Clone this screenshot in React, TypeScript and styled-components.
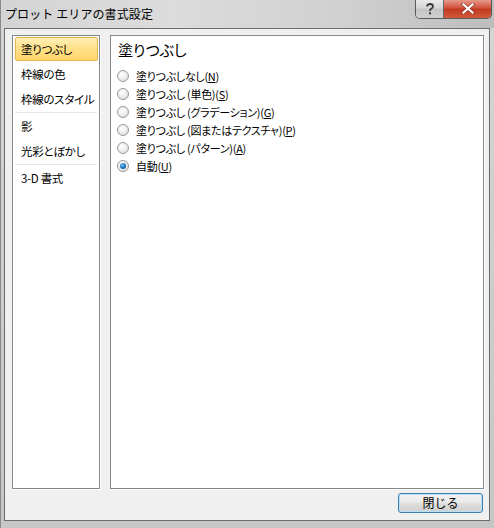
import React from "react";
import styled, { createGlobalStyle } from "styled-components";

const Global = createGlobalStyle`
  html, body { margin: 0; padding: 0; background: #ffffff; }
  body { font-family: "Noto Sans CJK JP", "Noto Sans", sans-serif; }
  * { box-sizing: border-box; }
`;

const Window = styled.div`
  width: 494px;
  height: 528px;
  display: flex;
  flex-direction: column;
  background: linear-gradient(to bottom, #d6d6d6 0%, #cfcfcf 40%, #c6c6c6 100%);
  border-left: 1px solid #8a8a8a;
  overflow: hidden;
`;

const TitleBar = styled.div`
  height: 28px;
  flex: none;
  display: flex;
  align-items: flex-start;
  justify-content: space-between;
  padding-left: 4px;
  background: linear-gradient(to right, #d4d4d4 0%, #dcdcdc 35%, #d0d0d0 70%, #bdbdbd 100%);
`;

const Title = styled.div`
  font-family: "Noto Sans CJK JP", sans-serif;
  font-size: 12px;
  line-height: 28px;
  color: #000;
  letter-spacing: 0.1px;
`;

const Caption = styled.div`
  display: flex;
  margin-right: 2px;
  margin-top: -1px;
  border: 1px solid #5a5a5a;
  border-top: none;
  border-radius: 0 0 5px 5px;
  overflow: hidden;
`;

const CapButton = styled.div<{ $close?: boolean }>`
  height: 19px;
  width: ${(p) => (p.$close ? "48px" : "27px")};
  display: flex;
  align-items: center;
  justify-content: center;
  background: ${(p) =>
    p.$close
      ? "linear-gradient(to bottom, #e8a493 0%, #d2553f 45%, #c23a22 55%, #d35a3c 100%)"
      : "linear-gradient(to bottom, #ececec 0%, #d6d6d6 45%, #c4c4c4 55%, #d0d0d0 100%)"};
  & + & { border-left: 1px solid #6a6a6a; }
`;

const Client = styled.div`
  flex: 1;
  margin: 0 4px 7px 3px;
  border: 1px solid #6b6b6b;
  background: #f0f0f0;
  padding: 6px 5px 7px 7px;
  display: grid;
  grid-template-columns: 88px 374px;
  grid-template-rows: 454px 20px;
  column-gap: 10px;
  row-gap: 4px;
`;

const Panel = styled.div`
  background: #ffffff;
  border: 1px solid #828790;
  box-shadow: 1px 1px 0 #ffffff;
`;

const NavPanel = styled(Panel)`
  padding: 1px 1px 1px 2px;
  display: flex;
  flex-direction: column;
`;

const NavItem = styled.div<{ $selected?: boolean }>`
  flex: none;
  height: 24px;
  margin-bottom: 1px;
  padding-left: ${(p) => (p.$selected ? "5px" : "6px")};
  display: flex;
  align-items: center;
  white-space: nowrap;
  font-size: 11.5px;
  letter-spacing: -0.3px;
  font-feature-settings: "palt";
  color: #000;
  border-radius: 2px;
  border: ${(p) => (p.$selected ? "1px solid #e3b650" : "none")};
  background: ${(p) =>
    p.$selected
      ? "linear-gradient(to bottom, #fff0b8 0%, #ffe08a 45%, #ffd66a 100%)"
      : "transparent"};
`;

const NavSep = styled.div`
  flex: none;
  height: 1px;
  margin: 0 1px 1px 0;
  background: #e6e6e6;
`;

const ContentPanel = styled(Panel)`
  padding: 3px 6px;
  display: flex;
  flex-direction: column;
`;

const Heading = styled.div`
  font-size: 15px;
  line-height: 22px;
  height: 22px;
  margin-left: 1px;
  font-feature-settings: "palt";
  color: #000;
  margin-bottom: 6px;
`;

const RadioRow = styled.label`
  flex: none;
  height: 18px;
  display: flex;
  align-items: center;
  gap: 7px;
  white-space: nowrap;
  font-size: 11px;
  letter-spacing: -0.3px;
  font-feature-settings: "palt";
  color: #000;
`;

const RadioCircle = styled.span<{ $checked?: boolean }>`
  width: 12px;
  height: 12px;
  border-radius: 50%;
  border: 1px solid #9a9a9a;
  background: radial-gradient(circle at 40% 35%, #ffffff 0%, #ebebeb 55%, #d2d2d2 100%);
  display: flex;
  align-items: center;
  justify-content: center;
  flex: none;
  &::after {
    content: "";
    display: ${(p) => (p.$checked ? "block" : "none")};
    width: 6px;
    height: 6px;
    border-radius: 50%;
    background: radial-gradient(circle at 40% 35%, #8cd0ff 0%, #1f7bc8 45%, #0b3f7a 100%);
  }
`;

const U = styled.span`
  text-decoration: underline;
  text-underline-offset: 1px;
`;

const ButtonRow = styled.div`
  grid-column: 1 / span 2;
  display: flex;
  justify-content: flex-end;
  padding-right: 1px;
`;

const Button = styled.button`
  width: 85px;
  height: 20px;
  font-family: "Noto Sans CJK JP", sans-serif;
  font-size: 12px;
  line-height: 16px;
  color: #000;
  border: 1px solid #3c7fb1;
  border-radius: 3px;
  background: linear-gradient(to bottom, #f2f2f2 0%, #ebebeb 45%, #dddddd 55%, #cfcfcf 100%);
  box-shadow: inset 0 0 0 1px #b9e0f7;
  padding: 0;
`;

const navItems: (string | null)[] = [
  "塗りつぶし",
  "枠線の色",
  "枠線のスタイル",
  null,
  "影",
  "光彩とぼかし",
  null,
  "3-D 書式",
];

const options: { label: string; key: string; checked?: boolean }[] = [
  { label: "塗りつぶしなし", key: "N" },
  { label: "塗りつぶし (単色)", key: "S" },
  { label: "塗りつぶし (グラデーション)", key: "G" },
  { label: "塗りつぶし (図またはテクスチャ)", key: "P" },
  { label: "塗りつぶし (パターン)", key: "A" },
  { label: "自動", key: "U", checked: true },
];

export default function App() {
  return (
    <>
      <Global />
      <Window>
        <TitleBar>
          <Title>プロット エリアの書式設定</Title>
          <Caption>
            <CapButton>
              <svg width="10" height="12" viewBox="0 0 10 12">
                <path
                  d="M2 3.5 C2 1.5 3.5 1 5 1 C6.8 1 8 2 8 3.5 C8 5 6.5 5.5 5.5 6.3 C5 6.8 5 7.3 5 8"
                  fill="none"
                  stroke="#3a3a3a"
                  strokeWidth="1.8"
                />
                <rect x="4" y="9.3" width="2" height="2" fill="#3a3a3a" />
              </svg>
            </CapButton>
            <CapButton $close>
              <svg width="14" height="11" viewBox="0 0 14 11">
                <path
                  d="M2 1 L12 10 M12 1 L2 10"
                  stroke="#5a1a10"
                  strokeWidth="3.4"
                  strokeLinecap="square"
                  opacity="0.5"
                />
                <path
                  d="M2.5 1.5 L11.5 9.5 M11.5 1.5 L2.5 9.5"
                  stroke="#ffffff"
                  strokeWidth="2.2"
                  strokeLinecap="square"
                />
              </svg>
            </CapButton>
          </Caption>
        </TitleBar>
        <Client>
          <NavPanel>
            {navItems.map((item, i) =>
              item === null ? (
                <NavSep key={i} />
              ) : (
                <NavItem key={i} $selected={i === 0}>
                  {item}
                </NavItem>
              )
            )}
          </NavPanel>
          <ContentPanel>
            <Heading>塗りつぶし</Heading>
            {options.map((o) => (
              <RadioRow key={o.key}>
                <RadioCircle $checked={o.checked} />
                <span>
                  {o.label}(<U>{o.key}</U>)
                </span>
              </RadioRow>
            ))}
          </ContentPanel>
          <ButtonRow>
            <Button>閉じる</Button>
          </ButtonRow>
        </Client>
      </Window>
    </>
  );
}
